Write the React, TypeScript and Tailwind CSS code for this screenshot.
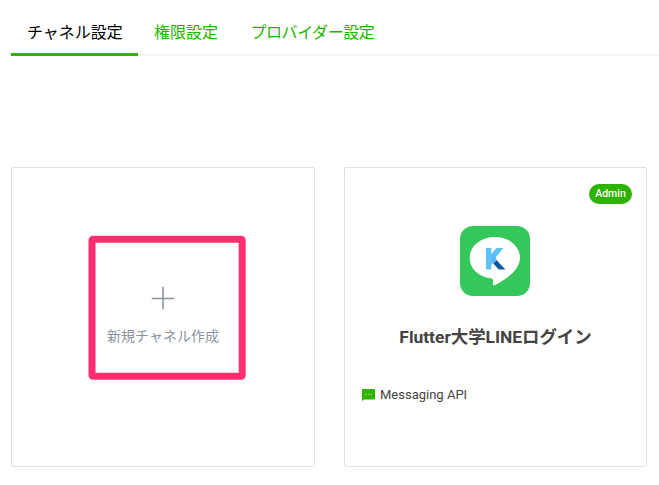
import React from "react";

function Tabs() {
  return (
    <nav className="ml-[11px] flex h-14 border-b-[3px] border-[#f8f8f8]">
      <a className="-mb-[3px] h-14 w-[127px] border-b-[3px] border-[#2db300] pt-[21px] pl-4 text-base leading-6 whitespace-nowrap text-black">
        チャネル設定
      </a>
      <a className="pt-[21px] pr-4 pl-4 text-base leading-6 whitespace-nowrap text-[#1db500]">権限設定</a>
      <a className="pt-[21px] pl-[16.5px] text-base leading-6 tracking-[-0.45px] whitespace-nowrap text-[#1db500]">
        プロバイダー設定
      </a>
    </nav>
  );
}

function NewChannelCard() {
  return (
    <section className="relative flex h-[300px] w-[304px] flex-col items-center rounded-[2px] border border-[#dfe1e4] pt-[118px]">
      <svg className="h-6 w-6" viewBox="0 0 24 24" fill="none" stroke="#8b939c" strokeWidth="1.6">
        <path d="M12 .75v22.5M.75 12.500h22.5" />
      </svg>
      <p className="mt-4 text-sm leading-5 text-[#8b939c]">新規チャネル作成</p>
      <svg className="absolute top-[67px] left-[76px] h-[146px] w-[159px]" viewBox="0 0 159 146" fill="none">
        <rect x="4" y="4.300" width="150.200" height="137" rx="1" stroke="#ff2e6e" strokeWidth="7" strokeLinejoin="round" />
      </svg>
    </section>
  );
}

function ChannelLogo() {
  return (
    <svg className="mr-[2px] h-[70px] w-[70px]" viewBox="0 0 70 70">
      <rect width="70" height="70" rx="13" fill="#34c759" />
      <path
        d="M35 11C20.800 11 9.700 20.200 9.700 32C9.700 42.500 18.500 50.700 31 52.500C33.500 52.900 33.200 54 32.800 57C32.500 59.800 33.300 60.200 35.800 58.800C44 54.400 60 44.500 60 32C60 20.200 49 11 35 11Z"
        fill="#fff"
      />
      <path d="M26 22h5.300v21.500H26z" fill="#5bc3fa" />
      <path d="M36.500 22h7L34 33.500l-2.700 3V28z" fill="#5bc3fa" />
      <path d="M31.300 28l5.500 5-5.500 6z" fill="#4db8f5" />
      <path d="M33.200 37.500l3.200-3.500 9 9.500h-6.600z" fill="#0d57a2" />
    </svg>
  );
}

function ChannelCard() {
  return (
    <section className="relative flex h-[300px] w-[303px] flex-col items-center rounded-[2px] border border-[#dfe1e4] pt-[58px]">
      <span className="absolute top-4 right-[14px] flex h-5 w-[43px] items-center justify-center rounded-full bg-[#2db300] pt-px text-[10.500px] leading-none font-medium text-white">
        Admin
      </span>
      <ChannelLogo />
      <h2 className="mt-[27px] text-[17.400px] leading-7 font-bold whitespace-nowrap text-[#444]">
        Flutter大学LINEログイン
      </h2>
      <div className="mt-[33px] flex items-center gap-[5px] self-start pl-[17px]">
        <svg className="h-3 w-[13px]" viewBox="0 0 13 12">
          <path d="M1 0h11a1 1 0 0 1 1 1v8.500a1 1 0 0 1-1 1H2L0 12V1a1 1 0 0 1 1-1Z" fill="#2db300" />
          <path d="M3 4.800h1.300v1.300H3zM5.800 4.800h1.300v1.300H5.800zM8.600 4.800h1.300v1.300H8.600z" fill="#9bdc83" />
        </svg>
        <span className="text-[13px] leading-[22px] text-[#444]">Messaging API</span>
      </div>
    </section>
  );
}

export default function App() {
  return (
    <main className="h-[485px] w-[659px] overflow-hidden bg-white font-[Roboto,'Noto_Sans_CJK_JP',sans-serif]">
      <Tabs />
      <div className="mt-[111px] ml-[11px] flex gap-[29px]">
        <NewChannelCard />
        <ChannelCard />
      </div>
    </main>
  );
}
